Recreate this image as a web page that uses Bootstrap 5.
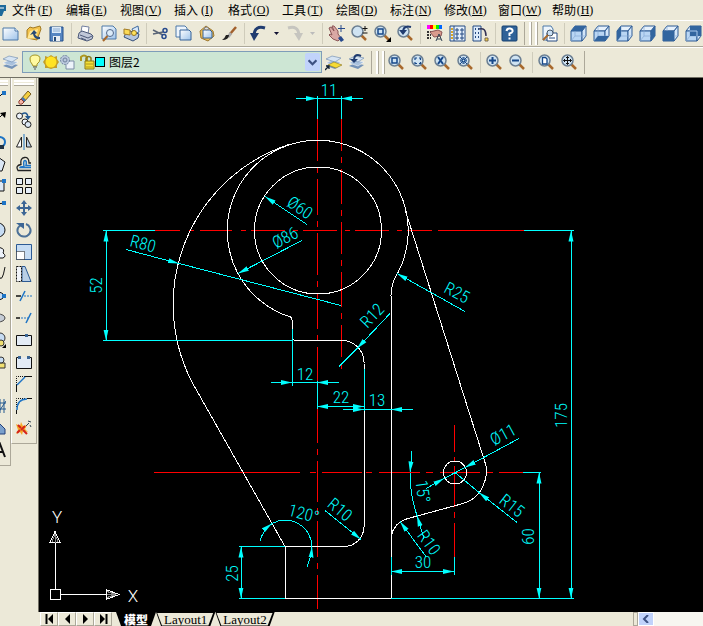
<!DOCTYPE html>
<html lang="zh-CN">
<head>
<meta charset="utf-8">
<meta name="viewport" content="width=device-width, initial-scale=1">
<title>CAD</title>
<link href="https://cdn.jsdelivr.net/npm/bootstrap@5.3.0/dist/css/bootstrap.min.css" rel="stylesheet">
<style>
:root{--face:#ece9d8;--shade:#aca899}
body{background:var(--face);font-family:"Liberation Sans","Noto Sans CJK SC",sans-serif;font-size:12px;line-height:16px;color:#000}
button{background:none;border:0;padding:0;color:inherit;font:inherit}
svg{display:block;flex:none}
.menu-strip{height:20px}
.app-mark{width:6px;height:16px}
.menu-strip button{width:54px;padding:2px 6px;white-space:nowrap;display:flex;font-family:"Noto Sans CJK SC",sans-serif}
.menu-strip button span{width:18px;text-align:center;font-family:"Liberation Serif",serif}
.strip{height:27px;border-top:1px solid #fff;border-bottom:1px solid var(--shade)}
.strip.second{height:30px;border-bottom:0;padding-bottom:1px}
.bar{padding-right:3px;border-right:1px solid var(--shade)}
.bar:first-child{margin-left:-1px}
.tool{width:23px;height:23px;display:flex;align-items:center;justify-content:center;flex:none}
.tool svg{width:17px;height:17px}
.drop{width:13px;height:23px;flex:none;display:flex;align-items:center;justify-content:center}
.split{width:6px;height:21px;flex:none;display:flex;justify-content:center}
.split::before{content:"";width:1px;background:#cfccbb}
.grip{width:8px;height:23px;margin:0 1px 0 4px;border:solid #fff;border-width:0 2px;box-shadow:1px 0 var(--shade),inset 1px 0 var(--shade);flex:none}
.layer-box{width:300px;height:22px;border:1px solid #7f9db9;background:#cde6d4;padding:0 1px 0 4px}
.layer-box svg{width:16px;height:16px}
.layer-box select{appearance:none;background:none;border:0;padding:0;margin-left:4px;font-family:"Noto Sans CJK SC",sans-serif;font-size:12px;color:#000;min-width:0}
.layer-box .arrow{width:15px;height:18px;background:#c1d3fb;border-radius:2px}
.swatch{width:10px;height:10px;background:#0ff;border:1px solid #000;flex:none}
.work{border-top:1px solid #716f64;min-height:0}
.side{border-right:1px solid var(--shade);border-bottom:1px solid var(--shade);padding-top:2px}
.side button{height:22px}
.side::before{content:"";height:5px;border:solid #fff;border-width:2px 0;box-shadow:0 1px var(--shade);margin:0 2px 2px}
.draw-bar{width:11px;overflow:hidden;align-items:flex-start}
.draw-bar::before{width:8px;margin-left:0}
.draw-bar button{width:8px}
.draw-bar svg,.modify-bar svg{width:16px;height:16px}
.draw-bar svg{margin-left:-10px}
.modify-bar{width:26px;align-items:center;border-left:1px solid #fff}
.modify-bar::before{width:20px}
.modify-bar button{width:24px;display:flex;align-items:center;justify-content:center}
.view{background:#000;border-left:1px solid #716f64;margin-left:1px;min-width:0}
.view svg{width:100%;height:100%}
.sheet-row{height:14px;margin-left:40px;overflow:hidden}
.step{width:18px;height:14px;border:solid;border-width:1px;border-color:#fff var(--shade) var(--shade) #fff;display:flex;align-items:center;justify-content:center}
.sheet{height:14px;line-height:13px;background:#000;clip-path:polygon(0 0,100% 0,calc(100% - 5px) 100%,5px 100%);font-family:"Liberation Serif",serif;font-size:13px}
.sheet span{display:block;padding:0 8px;background:var(--face);height:13px;clip-path:polygon(1px 0,calc(100% - 2px) 0,calc(100% - 7px) 100%,6px 100%)}
.sheet.now span{background:#000;color:#fff;font-family:"Noto Sans CJK SC",sans-serif;font-size:12px;font-weight:900}
.scroller{width:70px;background:#f7f6f0}
.scroller i{width:5px;border:1px solid var(--shade);background:var(--face)}
.scroller button{width:16px;background:#c1d3fb;border:1px solid #fff;display:flex;align-items:center;justify-content:center}
.w{stroke:#fff}.c{stroke:#0ff}.r{stroke:red}
.dim text{fill:#0ff;stroke:none;font-family:"Roboto Condensed","Liberation Sans Narrow","Roboto",sans-serif;font-weight:300;font-size:17px;text-anchor:middle}
.axis{fill:#fff;stroke:none;font-family:"Roboto",sans-serif;font-weight:300;font-size:17px;text-anchor:middle}
</style>
<script src="https://cdn.jsdelivr.net/npm/bootstrap@5.3.0/dist/js/bootstrap.bundle.min.js"></script>
</head>
<body class="d-flex flex-column vh-100 overflow-hidden">
<svg width="0" height="0" class="position-absolute" aria-hidden="true">
<defs>
<linearGradient id="pg" x2="1" y2="1"><stop stop-color="#fff"/><stop offset="1" stop-color="#9dc3ea"/></linearGradient>
<g id="lens"><path d="M10 10l5 5" stroke="#a8692c" stroke-width="2.5"/><circle cx="6.500" cy="6.500" r="5.500" fill="#cfe3f2" stroke="#6b7f92" stroke-width="1.500"/></g>
<g id="cube" stroke="#2c5a94" stroke-linejoin="round"><path d="M1 6l4-5h11l-4 5z" fill="#e6f1fc"/><path d="M1 6h11v10H1z" fill="#b9d6f4"/><path d="M12 6l4-5v10l-4 5z" fill="#d3e6f9"/><path d="M5 1v10h11M5 11l-4 5" fill="none" stroke="#88abd4" stroke-width=".7"/></g>
<g id="sheets"><path d="M1 12l6-3 9 2-6 4z" fill="#7593b8"/><path d="M1 9l6-3 9 2-6 4z" fill="#a9c1dd" stroke="#fff" stroke-width=".5"/><path d="M1 5l6-3 9 2-6 4z" fill="#d6e4f3" stroke="#6685ab" stroke-width=".6"/></g>
</defs>
<symbol id="new" viewBox="0 0 17 17"><path d="M1 3h12l3 3v9H1z" fill="url(#pg)" stroke="#4d79a8"/><path d="M13 3v3h3" fill="#fff" stroke="#4d79a8"/></symbol>
<symbol id="open" viewBox="0 0 17 17"><path d="M2 5l3-3 3 1 7-2 1 3-4 11-10-2z" fill="#f3c34c" stroke="#a27a24"/><path d="M5 6l8-2-2 9-9 1z" fill="#ffe795"/><path d="M15 14q-6 1-7-5l-3 1 4-5 3 3-2 1q1 3 5 3z" fill="#274a76"/></symbol>
<symbol id="save" viewBox="0 0 17 17"><path d="M2 2h13v14H2z" fill="#5786c2" stroke="#24508c"/><path d="M4 2h9v6H4z" fill="#dbe9f8"/><path d="M5 4h7M5 6h7" stroke="#8cabcf"/><path d="M5 11h7v5H5z" fill="#e8edf3"/><path d="M6 12h2v4H6z" fill="#274a76"/></symbol>
<symbol id="print" viewBox="0 0 17 17"><path d="M5 1l7 1-1 7-7-2z" fill="#fff" stroke="#7380a0"/><path d="M2 8l3-2 9 3 2 2-1 3-5 2-9-3z" fill="#c0c7d8" stroke="#4c5978"/><path d="M3 10l8 3 4-2M4 13l5 2" fill="none" stroke="#4c5978"/></symbol>
<symbol id="preview" viewBox="0 0 17 17"><path d="M2 1h11l3 3v10H2z" fill="url(#pg)" stroke="#4d79a8"/><circle cx="10" cy="8" r="3.500" fill="#dcebf8" stroke="#52698a"/><path d="M7.500 11L3 16" stroke="#a8692c" stroke-width="2"/></symbol>
<symbol id="publish" viewBox="0 0 17 17"><path d="M3 8l4-2 9 3-1 4-5 3-9-4z" fill="#b4c6df" stroke="#354f79"/><path d="M1 4l6 1v5l-6-1z" fill="#fbda55" stroke="#a27a24"/><path d="M9 4l6-3 1 6-5 2z" fill="#d8e9fb" stroke="#416b9f"/><circle cx="11" cy="8" r="2.500" fill="#ffe35b" stroke="#947424"/></symbol>
<symbol id="cut" viewBox="0 0 17 17"><path d="M1 5l10 5M1 9l10-2" stroke="#5a6577" stroke-width="1.500"/><circle cx="13" cy="5.500" r="2" fill="none" stroke="#274a8c" stroke-width="1.500"/><circle cx="12" cy="11.500" r="2" fill="none" stroke="#274a8c" stroke-width="1.500"/></symbol>
<symbol id="copy" viewBox="0 0 17 17"><path d="M1 1h9l2 2v9H1z" fill="#eef5fc" stroke="#4d79a8"/><path d="M5 5h9l2 2v8H5z" fill="url(#pg)" stroke="#346299"/></symbol>
<symbol id="paste" viewBox="0 0 17 17"><path d="M2 6l6-5 7 5 1 5-6 5-7-3z" fill="#edbd57" stroke="#9b762e"/><path d="M5 5h7l2 2v6H5z" fill="url(#pg)" stroke="#346299"/><path d="M6 3l3-1 2 2-3 1z" fill="#dedede" stroke="#888"/></symbol>
<symbol id="brush" viewBox="0 0 17 17"><path d="M15 2L9 9" stroke="#a2602c" stroke-width="2.500"/><path d="M10 8L7 12" stroke="#aaa" stroke-width="3"/><path d="M8 10q0 5-7 5 3-2 4-5z" fill="#222"/></symbol>
<symbol id="undo" viewBox="0 0 17 17"><path d="M15 3Q5 0 4 10" fill="none" stroke="#203c70" stroke-width="3"/><path d="M0 8h9l-5 8z" fill="#203c70"/></symbol>
<symbol id="redo" viewBox="0 0 17 17"><path d="M2 3q10-3 11 7" fill="none" stroke="#c6c5bf" stroke-width="3"/><path d="M17 8H8l5 8z" fill="#c6c5bf"/></symbol>
<symbol id="pan" viewBox="0 0 17 17"><path d="M1 3l2-1 3 4-2-5h2l4 5v3l3 4-3 3-5-2-4-4 1-1 2 1z" fill="#d9a8a4" stroke="#8b5556"/><path d="M10 13l3-2 3 4-3 2z" fill="#274a8c"/><path d="M13 0v7M10 3.500h7" stroke="#274a8c"/></symbol>
<symbol id="zrt" viewBox="0 0 17 17"><use href="#lens"/><path d="M14 1v5M11.500 3.500h5M11.500 8h5" stroke="#111"/></symbol>
<symbol id="zwin" viewBox="0 0 17 17"><use href="#lens"/><path d="M4 4h5v5H4z" fill="none" stroke="#174889" stroke-width="1.500"/></symbol>
<symbol id="zfly" viewBox="0 0 17 17"><use href="#zwin"/><path d="M17 12v5h-5z"/></symbol>
<symbol id="zprev" viewBox="0 0 17 17"><use href="#lens"/><path d="M14 2q-7-2-8 4" fill="none" stroke="#203c70" stroke-width="2"/><path d="M2 5h8l-4 5z" fill="#203c70"/></symbol>
<symbol id="zdyn" viewBox="0 0 17 17"><use href="#lens"/><path d="M4 6V4h2m2 0h1.500v2m0 2v1.500H8m-2 0H4V8" fill="none" stroke="#174889" stroke-width="1.200"/></symbol>
<symbol id="zscale" viewBox="0 0 17 17"><use href="#lens"/><path d="M4 3l5 7M9 3L4 10" stroke="#174889" stroke-width="2"/></symbol>
<symbol id="zcen" viewBox="0 0 17 17"><use href="#lens"/><path d="M3 3l3 3M10 3L7 6M3 10l3-3M10 10L7 7M3 6h3V3M7 3v3h3M3 7h3v3M7 10V7h3" fill="none" stroke="#174889"/></symbol>
<symbol id="zin" viewBox="0 0 17 17"><use href="#lens"/><path d="M6.500 3v7M3 6.500h7" stroke="#174889" stroke-width="2"/></symbol>
<symbol id="zout" viewBox="0 0 17 17"><use href="#lens"/><path d="M3 6.500h7" stroke="#174889" stroke-width="2"/></symbol>
<symbol id="zall" viewBox="0 0 17 17"><use href="#lens"/><path d="M4.500 3.500h3l1.500 1.500v5H4.500z" fill="#fff" stroke="#174889" stroke-width="1.300"/></symbol>
<symbol id="zext" viewBox="0 0 17 17"><use href="#lens"/><path d="M6.500 2.500v8M2.500 6.500h8M5 4l1.500-1.500L8 4M5 9l1.500 1.500L8 9M4 5L2.500 6.500 4 8M9 5l1.500 1.500L9 8" fill="none" stroke="#111"/></symbol>
<symbol id="props" viewBox="0 0 17 17"><path d="M1 0h4v4H1z" fill="#f0f"/><path d="M4 0h3v4H4z" fill="red"/><path d="M7 0h3v4H7z" fill="#ff0"/><path d="M10 0h3v4h-3z" fill="#0e0"/><path d="M13 0h3v4h-3z" fill="#06f"/><path d="M1 7h4M1 10h4M1 13h4" stroke="#333" stroke-width="2" stroke-dasharray="2 1"/><path d="M4 7l8-2 4 2-1 4-7 1z" fill="#d99b8d" stroke="#8b5556"/><path d="M10 16l3-7 3 7M11 14h4" fill="none" stroke="#345"/></symbol>
<symbol id="dcen" viewBox="0 0 17 17"><path d="M1 1h15v15H1z" fill="#e6f0fb" stroke="#244a82"/><path d="M5 1v15" stroke="#244a82"/><path d="M3 3v12" stroke="#d7a72b" stroke-width="2" stroke-dasharray="2 1"/><path d="M7 4h2v2H7zM12 4h2v2h-2zM7 8h2v2H7zM12 8h2v2h-2zM7 12h2v2H7zM12 12h2v2h-2z" fill="none" stroke="#244a82"/></symbol>
<symbol id="palette" viewBox="0 0 17 17"><path d="M1 1h8v15H1z" fill="#dceafa" stroke="#244a82"/><path d="M3 4h1M3 8h1M3 12h1M6 4h1M6 8h1M6 12h1" stroke="#244a82" stroke-width="2"/><path d="M7 4q7-2 7 7" fill="none" stroke="#335" stroke-width="1.500"/><path d="M13 13h3v3h-3z" fill="#f5d33b" stroke="#765"/></symbol>
<symbol id="help" viewBox="0 0 17 17"><rect x="1" y="1" width="15" height="15" rx="1" fill="#2f6298" stroke="#174170"/><path d="M5.500 6Q6 3 9 3.500q3 .5 2.500 3Q11 8 8.500 8.500V11M8.500 12.500v2" fill="none" stroke="#fff" stroke-width="2"/></symbol>
<symbol id="nview" viewBox="0 0 17 17"><path d="M2 1h8l2 3v11H2z" fill="#edf5fc" stroke="#4d79a8"/><path d="M6 8h10v8H6z" fill="#fff" stroke="#244a82"/><path d="M8 13h6" stroke="#244a82"/><circle cx="9" cy="8" r="3" fill="#cae0f5" stroke="#456"/><path d="M7 10l-5 5" stroke="#a8692c" stroke-width="2"/></symbol>
<symbol id="c1" viewBox="0 0 17 17"><use href="#cube"/><path d="M1 6l4-5h11l-4 5z" fill="#32659f"/></symbol>
<symbol id="c2" viewBox="0 0 17 17"><use href="#cube"/><path d="M1 16l4-5h11l-4 5z" fill="#32659f"/></symbol>
<symbol id="c3" viewBox="0 0 17 17"><use href="#cube"/><path d="M1 6l4-5v10l-4 5z" fill="#32659f"/></symbol>
<symbol id="c4" viewBox="0 0 17 17"><use href="#cube"/><path d="M12 6l4-5v10l-4 5z" fill="#32659f"/></symbol>
<symbol id="c5" viewBox="0 0 17 17"><use href="#cube"/><path d="M1 6h11v10H1z" fill="#32659f"/></symbol>
<symbol id="c6" viewBox="0 0 17 17"><use href="#cube"/><path d="M5 1h11v10H5z" fill="#32659f"/><path d="M5 6h7v5" fill="none" stroke="#a9c9ed"/></symbol>
<symbol id="layers" viewBox="0 0 17 17"><use href="#sheets"/></symbol>
<symbol id="lcur" viewBox="0 0 17 17"><use href="#sheets"/><path d="M3 11l6-3 8 3-6 3z" fill="#f6db35" stroke="#8b7622" stroke-width=".6"/><path d="M0 16l4-4M1 12h3v3" fill="none" stroke="#123" stroke-width="1.300"/></symbol>
<symbol id="lprev" viewBox="0 0 17 17"><use href="#sheets"/><path d="M13 2Q7-1 6 5" fill="none" stroke="#203c70" stroke-width="2"/><path d="M2 5h8l-4 4z" fill="#203c70"/></symbol>
<symbol id="bulb" viewBox="0 0 16 16"><path d="M5 10Q3 8 3 5q0-4 5-4t5 4q0 3-3 5v2H6z" fill="#fff9a0" stroke="#a59425"/><path d="M6 13h4M7 15h2" stroke="#555"/></symbol>
<symbol id="sun" viewBox="0 0 16 16"><path d="M2 2l3 1 3-2 3 2 3-1v3l2 3-2 3v3h-3l-3 1-3-1H2v-3L0 8l2-3z" fill="#c49f28"/><circle cx="8" cy="8" r="5.500" fill="#ffe324"/></symbol>
<symbol id="vfreeze" viewBox="0 0 16 16"><path d="M7 7h8v8H7z" fill="#edf3fa" stroke="#7c8da6"/><circle cx="6" cy="6" r="4.500" fill="#b9c7dc" stroke="#71839f" stroke-dasharray="2 1"/><circle cx="6" cy="6" r="2" fill="none" stroke="#71839f"/></symbol>
<symbol id="lock" viewBox="0 0 16 16"><path d="M2 7V3q3-3 6 0v5" fill="none" stroke="#ae981f" stroke-width="2"/><path d="M7 7V4q3-3 5 0v4" fill="none" stroke="#8b7a1b" stroke-width="1.500"/><path d="M6 7h9v8H6z" fill="#f3df36" stroke="#8b7a1b"/><path d="M7 10h7M7 13h7" stroke="#ae981f"/></symbol>
<symbol id="erase" viewBox="0 0 16 16"><path d="M0 15.500h15" stroke="#222"/><path d="M5 9l7-8 3 3-7 8z" fill="#f4cf3f" stroke="#775c1e"/><path d="M6 8l3 3" stroke="#4673ad" stroke-width="3"/><path d="M3 11l2-2 3 3-2 2q-4 1-3-3z" fill="#f5b5a7" stroke="#8e3c2f"/></symbol>
<symbol id="mcopy" viewBox="0 0 16 16"><circle cx="3.500" cy="4" r="3" fill="#edf3fb" stroke="#222"/><circle cx="9" cy="10" r="3" fill="#edf3fb" stroke="#222"/><circle cx="12" cy="12.500" r="3" fill="#dce8f5" stroke="#222"/><path d="M6 2q5-3 6 3" fill="none" stroke="#23588f" stroke-width="1.500"/><path d="M9 4h6l-3 4z" fill="#23588f"/></symbol>
<symbol id="mirror" viewBox="0 0 16 16"><path d="M5.500 3v10H.5z" fill="#fff" stroke="#222"/><path d="M10.500 3v10h5z" fill="#b9cfe6" stroke="#222"/><path d="M8 0v16" stroke="#1e74c5"/></symbol>
<symbol id="offset" viewBox="0 0 16 16"><path d="M15 14.500H2q-3-5 3-6Q4 2 8.500 1.500T13 7h2" fill="none" stroke="#222" stroke-width="1.300"/><path d="M15 11.500H4q0-1 4-1-1-6 1-6t1 5h5" fill="none" stroke="#1e74c5" stroke-width="1.500"/></symbol>
<symbol id="array" viewBox="0 0 16 16"><path d="M.5.500h6v6h-6zM9.500.500h6v6h-6zM.5 9.500h6v6h-6zM9.500 9.500h6v6h-6z" fill="#e6effa" stroke="#111"/></symbol>
<symbol id="move" viewBox="0 0 16 16"><path d="M8 2v12M2 8h12" stroke="#3c6695" stroke-width="2"/><path d="M8 0l3 4H5zM8 16l3-4H5zM0 8l4-3v6zM16 8l-4-3v6z" fill="#3c6695"/></symbol>
<symbol id="rotate" viewBox="0 0 16 16"><path d="M5 3Q0 6 2 11q3 5 9 3 5-3 3-8-1-3-4-4" fill="none" stroke="#4c7198" stroke-width="2"/><path d="M0 1h8v6z" fill="#3c6695"/></symbol>
<symbol id="scale" viewBox="0 0 16 16"><path d="M.5.500h15v15H.5z" fill="#c6dcf3" stroke="#2c5a94"/><path d="M.5 7.500h8v8h-8z" fill="#fff" stroke="#111" stroke-dasharray="1 1"/></symbol>
<symbol id="stretch" viewBox="0 0 16 16"><path d="M6 .5h3l6 15H6z" fill="#b9cfe6" stroke="#2c5a94"/><path d="M.5.500h5v15h-5z" fill="#f2f5fa" stroke="#111" stroke-dasharray="2 1"/></symbol>
<symbol id="trim" viewBox="0 0 16 16"><path d="M0 8h5" stroke="#111" stroke-width="1.500"/><path d="M8 8h8" stroke="#1e74c5" stroke-dasharray="2 1"/><path d="M4 13L9 3" stroke="#1e74c5" stroke-width="1.500"/></symbol>
<symbol id="extend" viewBox="0 0 16 16"><path d="M0 8h4" stroke="#111" stroke-width="1.500"/><path d="M5 8h7" stroke="#1e74c5" stroke-dasharray="2 1"/><path d="M10 13l5-10" stroke="#1e74c5" stroke-width="1.500"/></symbol>
<symbol id="break1" viewBox="0 0 16 16"><path d="M.5 3.500h15v10H.5z" fill="#e3ebf5" stroke="#111"/><path d="M9 2h3v3H9z" fill="#3c6695"/></symbol>
<symbol id="break2" viewBox="0 0 16 16"><path d="M4 3.500H.5v11h15v-11H12" fill="#e3ebf5" stroke="#111"/><path d="M2 2h3v3H2zM11 2h3v3h-3z" fill="#3c6695"/></symbol>
<symbol id="chamfer" viewBox="0 0 16 16"><path d="M.5 9V.5H9" fill="none" stroke="#111" stroke-dasharray="1 1"/><path d="M.5 16V9M9 .5h7" stroke="#111"/><path d="M1 9l8-8" stroke="#1e74c5" stroke-width="1.500"/></symbol>
<symbol id="fillet" viewBox="0 0 16 16"><path d="M.5 9V.5H9" fill="none" stroke="#111" stroke-dasharray="1 1"/><path d="M.5 16v-4M11 .5h5" stroke="#111"/><path d="M1 12Q1 1 11 1" fill="none" stroke="#1e74c5" stroke-width="1.500"/></symbol>
<symbol id="explode" viewBox="0 0 16 16"><path d="M0 4l4 2 1-4 2 4 4-1-2 4 3 3-5-1-1 4-2-3-4 2 2-4z" fill="#f7a928"/><path d="M2 5l3 3M9 6l-4 4M1 13l3-3M7 10l4 4" stroke="#d5241a" stroke-width="2"/><path d="M10 6l3-3M12 1l3 1M14 5l1 2" stroke="#345"/></symbol>
</svg>

<nav class="menu-strip d-flex align-items-center" aria-label="菜单">
<svg class="app-mark" viewBox="0 0 6 16"><path d="M0 3h6v6H4l-2 5H0z" fill="#1e6a9b"/><path d="M0 6h4" stroke="#fff"/></svg>
<button>文件<span>(<u>F</u>)</span></button><button>编辑<span>(<u>E</u>)</span></button><button>视图<span>(<u>V</u>)</span></button><button>插入<span>(<u>I</u>)</span></button><button>格式<span>(<u>O</u>)</span></button><button>工具<span>(<u>T</u>)</span></button><button>绘图<span>(<u>D</u>)</span></button><button>标注<span>(<u>N</u>)</span></button><button>修改<span>(<u>M</u>)</span></button><button>窗口<span>(<u>W</u>)</span></button><button>帮助<span>(<u>H</u>)</span></button>
</nav>

<div class="strip d-flex align-items-center overflow-hidden">
<div class="bar d-flex align-items-center">
<button class="tool" aria-label="新建"><svg><use href="#new"/></svg></button><button class="tool" aria-label="打开"><svg><use href="#open"/></svg></button><button class="tool" aria-label="保存"><svg><use href="#save"/></svg></button><span class="split"></span>
<button class="tool" aria-label="打印"><svg><use href="#print"/></svg></button><button class="tool" aria-label="预览"><svg><use href="#preview"/></svg></button><button class="tool" aria-label="发布"><svg><use href="#publish"/></svg></button><span class="split"></span>
<button class="tool" aria-label="剪切"><svg><use href="#cut"/></svg></button><button class="tool" aria-label="复制"><svg><use href="#copy"/></svg></button><button class="tool" aria-label="粘贴"><svg><use href="#paste"/></svg></button><button class="tool" aria-label="特性匹配"><svg><use href="#brush"/></svg></button><span class="split"></span>
<button class="tool" aria-label="放弃"><svg><use href="#undo"/></svg></button><button class="drop" aria-label="放弃列表"><svg width="5" height="3"><path d="M0 0h5L2.500 3z" fill="#113"/></svg></button><button class="tool" aria-label="重做"><svg><use href="#redo"/></svg></button><button class="drop" aria-label="重做列表"><svg width="5" height="3"><path d="M0 0h5L2.500 3z" fill="#bbb"/></svg></button><span class="split"></span>
<button class="tool" aria-label="平移"><svg><use href="#pan"/></svg></button><button class="tool" aria-label="实时缩放"><svg><use href="#zrt"/></svg></button><button class="tool" aria-label="窗口缩放"><svg><use href="#zfly"/></svg></button><button class="tool" aria-label="上一个缩放"><svg><use href="#zprev"/></svg></button><span class="split"></span>
<button class="tool" aria-label="特性"><svg><use href="#props"/></svg></button><button class="tool" aria-label="设计中心"><svg><use href="#dcen"/></svg></button><button class="tool" aria-label="工具选项板"><svg><use href="#palette"/></svg></button><span class="split"></span>
<button class="tool" aria-label="帮助"><svg><use href="#help"/></svg></button>
</div>
<span class="grip"></span>
<button class="tool" aria-label="命名视图"><svg><use href="#nview"/></svg></button><span class="split"></span>
<button class="tool" aria-label="俯视图"><svg><use href="#c1"/></svg></button><button class="tool" aria-label="仰视图"><svg><use href="#c2"/></svg></button><button class="tool" aria-label="左视图"><svg><use href="#c3"/></svg></button><button class="tool" aria-label="右视图"><svg><use href="#c4"/></svg></button><button class="tool" aria-label="主视图"><svg><use href="#c5"/></svg></button><button class="tool" aria-label="后视图"><svg><use href="#c6"/></svg></button>
</div>

<div class="strip second d-flex align-items-center overflow-hidden">
<div class="bar d-flex align-items-center">
<button class="tool" aria-label="图层管理器"><svg><use href="#layers"/></svg></button>
<div class="layer-box d-flex align-items-center">
<svg><use href="#bulb"/></svg><svg><use href="#sun"/></svg><svg><use href="#vfreeze"/></svg><svg class="ms-1"><use href="#lock"/></svg><span class="swatch"></span>
<select class="flex-grow-1" aria-label="图层"><option>图层2</option></select>
<span class="arrow d-flex align-items-center justify-content-center"><svg viewBox="0 0 16 16" style="width:9px;height:9px"><path d="M1 4l7 7 7-7" fill="none" stroke="#3d5182" stroke-width="4"/></svg></span>
</div>
<button class="tool" aria-label="置为当前图层"><svg><use href="#lcur"/></svg></button><button class="tool" aria-label="上一个图层"><svg><use href="#lprev"/></svg></button>
</div>
<span class="grip"></span>
<div class="bar d-flex align-items-center">
<button class="tool" aria-label="窗口缩放"><svg><use href="#zwin"/></svg></button><button class="tool" aria-label="动态缩放"><svg><use href="#zdyn"/></svg></button><button class="tool" aria-label="比例缩放"><svg><use href="#zscale"/></svg></button><button class="tool" aria-label="中心缩放"><svg><use href="#zcen"/></svg></button><span class="split"></span>
<button class="tool" aria-label="放大"><svg><use href="#zin"/></svg></button><button class="tool" aria-label="缩小"><svg><use href="#zout"/></svg></button><span class="split"></span>
<button class="tool" aria-label="全部缩放"><svg><use href="#zall"/></svg></button><button class="tool" aria-label="范围缩放"><svg><use href="#zext"/></svg></button>
</div>
</div>

<main class="work d-flex flex-grow-1 align-items-start">
<div class="side draw-bar d-flex flex-column">
<button aria-label="直线"><svg><path d="M1 15L13 3" stroke="#111"/><path d="M12 1h4v4h-4z" fill="#1e74c5"/></svg></button>
<button aria-label="构造线"><svg><path d="M1 14L13 2" stroke="#111"/><path d="M16 0l-1 6-5-5z"/></svg></button>
<button aria-label="多段线"><svg><path d="M3 3h7q5 1 5 5t-5 5" fill="none" stroke="#1e74c5" stroke-width="2"/><path d="M10 11h4v4h-4z" fill="#234"/></svg></button>
<button aria-label="正多边形"><svg><path d="M8 1l7 5-3 9H3z" fill="#dce8f5" stroke="#111"/></svg></button>
<button aria-label="矩形"><svg><path d="M1 3h13v10H1z" fill="#dce8f5" stroke="#111"/><path d="M12 1h4v4h-4z" fill="#1e74c5"/></svg></button>
<button aria-label="圆弧"><svg><path d="M2 14Q4 3 14 3" fill="none" stroke="#111"/><path d="M12 1h4v4h-4z" fill="#1e74c5"/></svg></button>
<button aria-label="圆"><svg><circle cx="8" cy="8" r="7" fill="#c6dcf3" stroke="#111"/></svg></button>
<button aria-label="修订云线"><svg><path d="M4 14q-4-4 0-7 2-6 7-3 4 1 2 5 4 3 0 5z" fill="#edf3fb" stroke="#111"/></svg></button>
<button aria-label="样条曲线"><svg><path d="M3 12q3-10 6-2t6-9" fill="none" stroke="#111"/></svg></button>
<button aria-label="椭圆"><svg><ellipse cx="7" cy="8" rx="7" ry="4" fill="#c6dcf3" stroke="#111"/><path d="M12 6h4v4h-4z" fill="#1e74c5"/></svg></button>
<button aria-label="椭圆弧"><svg><ellipse cx="8" cy="8" rx="7" ry="4" fill="#c6cdd6" stroke="#444"/></svg></button>
<button aria-label="插入块"><svg><circle cx="10" cy="6" r="5" fill="#c6dcf3" stroke="#333"/><circle cx="11" cy="11" r="3" fill="#f0df70" stroke="#333"/><path d="M16 12v4h-4z"/></svg></button>
<button aria-label="创建块"><svg><path d="M5 9h10v5H5z" fill="#f0df70" stroke="#333"/><circle cx="11" cy="6" r="3" fill="#c6dcf3" stroke="#333"/></svg></button>
<button aria-label="点"><svg><path d="M14 7v2" stroke="none"/></svg></button>
<button aria-label="图案填充"><svg><path d="M10 1v14M14 1v14M2 5h14M2 11h14M8 15l8-12" fill="none" stroke="#23588f"/></svg></button>
<button aria-label="面域"><svg><path d="M2 3h7l6 6v5H2z" fill="#7aa0cc" stroke="#23407a"/></svg></button>
<button class="mb-1" aria-label="多行文字"><svg><path d="M5 15l5-13 5 13M7 10h6" fill="none" stroke="#111" stroke-width="2"/></svg></button>
</div>
<div class="side modify-bar d-flex flex-column">
<button aria-label="删除"><svg><use href="#erase"/></svg></button><button aria-label="复制"><svg><use href="#mcopy"/></svg></button><button aria-label="镜像"><svg><use href="#mirror"/></svg></button><button aria-label="偏移"><svg><use href="#offset"/></svg></button><button aria-label="阵列"><svg><use href="#array"/></svg></button><button aria-label="移动"><svg><use href="#move"/></svg></button><button aria-label="旋转"><svg><use href="#rotate"/></svg></button><button aria-label="缩放"><svg><use href="#scale"/></svg></button><button aria-label="拉伸"><svg><use href="#stretch"/></svg></button><button aria-label="修剪"><svg><use href="#trim"/></svg></button><button aria-label="延伸"><svg><use href="#extend"/></svg></button><button aria-label="打断于点"><svg><use href="#break1"/></svg></button><button aria-label="打断"><svg><use href="#break2"/></svg></button><button aria-label="倒角"><svg><use href="#chamfer"/></svg></button><button aria-label="圆角"><svg><use href="#fillet"/></svg></button><button class="mb-1" aria-label="分解"><svg><use href="#explode"/></svg></button>
</div>
<div class="view flex-grow-1 align-self-stretch">
<svg viewBox="39 77.500 664 534" preserveAspectRatio="xMinYMin meet" fill="none" stroke-width="1" role="img" aria-label="零件图">
<defs><marker id="tip" viewBox="0 0 11 6" refX="11" refY="3" markerWidth="11" markerHeight="6" markerUnits="userSpaceOnUse" orient="auto-start-reverse"><path d="M0 .5L11 3 0 5.500z" fill="#0ff"/></marker></defs>
<g class="r" shape-rendering="crispEdges">
<path d="M155 230H432" stroke-dasharray="25 9 5 6 32 9 5 5 34 8 5 5 34 8 5 5 34 8 5 5"/><path d="M438 230H524"/>
<path d="M154 472H300M310 472h6M322 472h40M366 472h6M379 472h41M426 472h7M440 472h40M487 472h6M499 472h24"/>
<path d="M317 118V608" stroke-dasharray="42 6 6 6 36 6 6 6"/><path d="M341 118V372" stroke-dasharray="32 6 6 6 35 6 6 6"/>
<path d="M454 424v27M454 456v4M454 465v41M454 511v6M454 522v34"/>
</g>
<g class="w" shape-rendering="crispEdges">
<circle cx="318" cy="230" r="63.500"/>
<path d="M292 317A90.500 90.500 0 1 1 398 272Q391 283 391 295V598H285V546H344A20 20 0 0 0 364 526V363A22 22 0 0 0 342 340H296Q292 340 292 336V319Q292 318 290 317"/>
<path d="M289 144A168.500 168.500 0 0 0 195 387L285 546"/>
<path d="M405 209L485 462Q488 470 485 480Q480 498 463 503L408 518Q394 522 391 536"/>
<circle cx="455" cy="472" r="11.500"/>
<path d="M50 589h10v10H50zM55 589V542M61 594H106M55 531l5 11H50zM119 594l-13-5v10z"/><path d="M55 534l-3 7M55 534v8M55 534l3 7M116 594l-9-3M116 594h-9M116 594l-9 3" stroke="#888"/>
</g>
<g class="c dim">
<g shape-rendering="crispEdges">
<path d="M317 95v23M341 95v23M103 230h52M524 230h50M103 340H292M523 472h18M391 598H574M391 556v18M454 556v18M239 546h46M239 598h46M292 328v57M317 380v28M364 368v42M317 98h24"/>
<path d="M106 230V340" marker-start="url(#tip)" marker-end="url(#tip)"/>
<path d="M571 230V598" marker-start="url(#tip)" marker-end="url(#tip)"/>
<path d="M539 472V598" marker-start="url(#tip)" marker-end="url(#tip)"/>
<path d="M241 546V598" marker-start="url(#tip)" marker-end="url(#tip)"/>
<path d="M391 571H454" marker-start="url(#tip)" marker-end="url(#tip)"/>
<path d="M317 406H364" marker-start="url(#tip)" marker-end="url(#tip)"/>
<path d="M296 98H317" marker-end="url(#tip)"/><path d="M363 98H341" marker-end="url(#tip)"/>
<path d="M271 382H292" marker-end="url(#tip)"/><path d="M339 382H317" marker-end="url(#tip)"/><path d="M292 382h25"/>
<path d="M343 409H364" marker-end="url(#tip)"/><path d="M413 409H391" marker-end="url(#tip)"/><path d="M364 409h27"/>
<path d="M390 313L357 348" marker-end="url(#tip)"/><path d="M357 348L339 366"/>
<path d="M307 224L265 196" marker-end="url(#tip)"/>
<path d="M302 240L238 273" marker-end="url(#tip)"/>
<path d="M126 249L179 263" marker-end="url(#tip)"/><path d="M179 263L341 305"/>
<path d="M465 311L397 273" marker-end="url(#tip)"/>
<path d="M519 438L465 467" marker-end="url(#tip)"/><path d="M426 488L444 478" marker-end="url(#tip)"/><path d="M444 478L465 467"/>
<path d="M517 522L479 492" marker-end="url(#tip)"/><path d="M455 472L479 492"/>
<path d="M412 451Q411 461 410 472" marker-end="url(#tip)"/><path d="M410 472Q410 495 417 515"/><path d="M424 538L417 515" marker-end="url(#tip)"/>
<path d="M426 556L400 521" marker-end="url(#tip)"/>
<path d="M325 510L361 539" marker-end="url(#tip)"/>
<path d="M260 540Q263 530 272 523" marker-end="url(#tip)"/><path d="M272 523A27 27 0 0 1 312 546"/><path d="M307 566Q311 557 312 546" marker-end="url(#tip)"/>
</g>
<text x="329" y="95">11</text><text x="305" y="379">12</text><text x="341" y="402">22</text><text x="377" y="405">13</text><text x="423" y="567">30</text>
<text transform="translate(102 285) rotate(-90)">52</text><text transform="translate(567 415) rotate(-90)">175</text><text transform="translate(534 536) rotate(-90)">60</text><text transform="translate(238 573) rotate(-90)">25</text>
<text transform="translate(143 243) rotate(15)" y="6">R80</text>
<text transform="translate(300 207) rotate(34)" y="6">Ø60</text>
<text transform="translate(285 237) rotate(-27)" y="6">Ø86</text>
<text transform="translate(457 292) rotate(28)" y="6">R25</text>
<text transform="translate(372 315) rotate(-46)" y="6">R12</text>
<text transform="translate(503 434) rotate(-28)" y="6">Ø11</text>
<text transform="translate(512 505) rotate(38)" y="6">R15</text>
<text transform="translate(423 491) rotate(82)" y="6">15°</text>
<text transform="translate(429 542) rotate(54)" y="6">R10</text>
<text transform="translate(340 509) rotate(40)" y="6">R10</text>
<text transform="translate(304 513) rotate(15)" y="6">120°</text>
</g>
<text class="axis" x="57" y="522">Y</text><text class="axis" x="133" y="601">X</text>
</svg>
</div>
</main>

<footer class="sheet-row d-flex">
<button class="step" aria-label="首个"><svg width="9" height="10"><path d="M1.500 0v10" stroke="#000" stroke-width="2"/><path d="M8 0v10L3 5z"/></svg></button><button class="step" aria-label="前一个"><svg width="9" height="10"><path d="M7 0v10L2 5z"/></svg></button><button class="step" aria-label="后一个"><svg width="9" height="10"><path d="M2 0v10l5-5z"/></svg></button><button class="step" aria-label="末个"><svg width="9" height="10"><path d="M7.500 0v10" stroke="#000" stroke-width="2"/><path d="M1 0v10l5-5z"/></svg></button>
<button class="sheet now ms-1"><span>模型</span></button><button class="sheet"><span>Layout1</span></button><button class="sheet"><span>Layout2</span></button>
<div class="scroller d-flex ms-auto"><i></i><button aria-label="向左滚动"><svg width="8" height="8"><path d="M6 0L2 4l4 4" fill="none" stroke="#3d5182" stroke-width="2"/></svg></button></div>
</footer>
</body>
</html>
